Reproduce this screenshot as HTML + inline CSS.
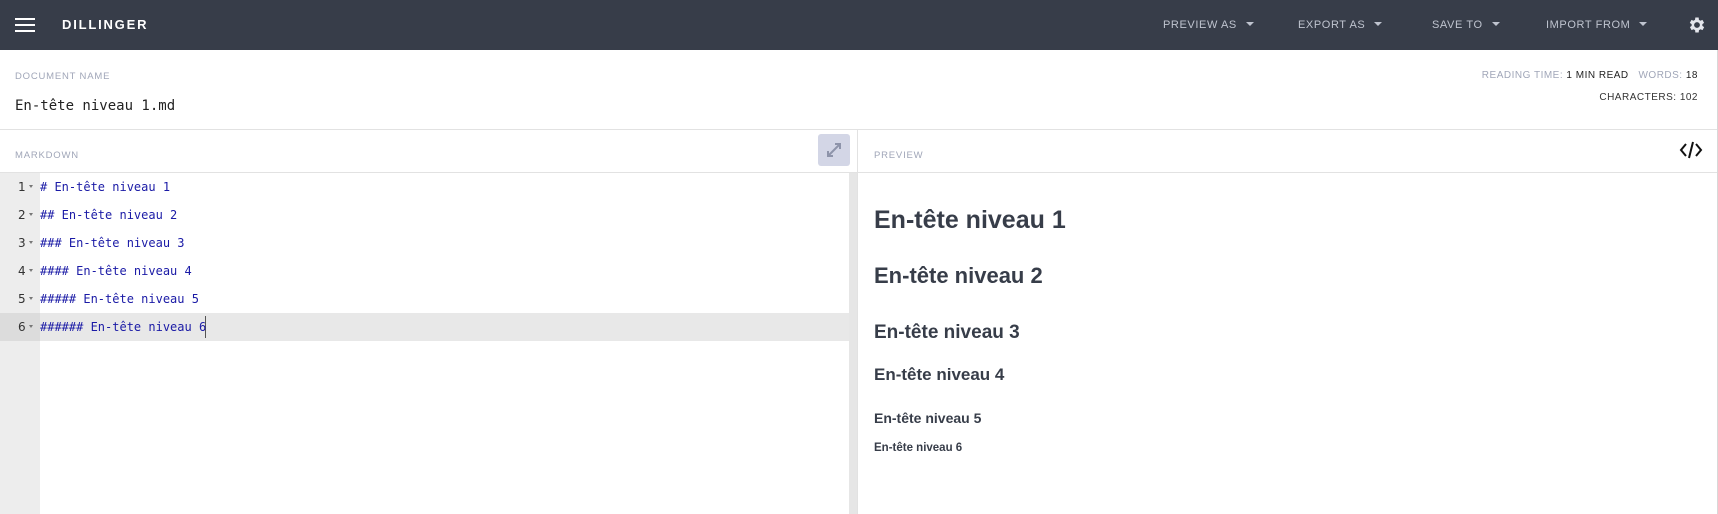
<!DOCTYPE html>
<html><head><meta charset="utf-8"><style>
*{margin:0;padding:0;box-sizing:border-box}
body{width:1718px;height:514px;overflow:hidden;background:#fff;font-family:"Liberation Sans","DejaVu Sans",sans-serif;position:relative}
.nav{position:absolute;left:0;top:0;width:1718px;height:50px;background:#373d49}
.abs{position:absolute;white-space:nowrap}
.navi{color:#bfc4cf;font-size:11px;letter-spacing:.6px;top:19px}
.navi:after{content:"";display:inline-block;margin-left:9px;border-left:4px solid transparent;border-right:4px solid transparent;border-top:4px solid #bfc4cf;vertical-align:2px}
.lbl{color:#a0a6b8;font-size:9.5px;letter-spacing:.8px}
.code{font-family:"DejaVu Sans Mono",monospace;font-size:12px;color:#1a1aa6;left:40px}
.num{font-family:"DejaVu Sans",sans-serif;font-size:12px;color:#333;left:18px}
.num:after{content:"";display:inline-block;margin-left:3px;border-left:2.5px solid transparent;border-right:2.5px solid transparent;border-top:3px solid #777;vertical-align:3px}
.h{color:#373d49;font-weight:bold;left:874px;font-family:"Liberation Sans",sans-serif}
</style></head><body>
<div class="nav">
 <div class="abs" style="left:15px;top:18px;width:20px;height:2px;background:#fff"></div>
 <div class="abs" style="left:15px;top:24px;width:20px;height:2px;background:#fff"></div>
 <div class="abs" style="left:15px;top:30px;width:20px;height:2px;background:#fff"></div>
 <div class="abs" style="left:62px;top:17px;color:#fff;font-size:13px;font-weight:bold;letter-spacing:1.8px">DILLINGER</div>
 <div class="abs navi" style="left:1163px">PREVIEW AS</div>
 <div class="abs navi" style="left:1298px">EXPORT AS</div>
 <div class="abs navi" style="left:1432px">SAVE TO</div>
 <div class="abs navi" style="left:1546px">IMPORT FROM</div>
 <svg class="abs" style="left:1687px;top:15px" width="20" height="20" viewBox="0 0 24 24"><path fill="#e4e6ec" d="M19.4 13a7.5 7.5 0 0 0 0-2l2.1-1.6-2-3.5-2.5 1a7 7 0 0 0-1.7-1L15 3h-4l-.4 2.9a7 7 0 0 0-1.7 1l-2.5-1-2 3.5L6.6 11a7.5 7.5 0 0 0 0 2l-2.1 1.6 2 3.5 2.5-1a7 7 0 0 0 1.7 1L11 21h4l.4-2.9a7 7 0 0 0 1.7-1l2.5 1 2-3.5zM13 15.5a3.5 3.5 0 1 1 0-7 3.5 3.5 0 0 1 0 7z" transform="translate(-1 0)"/></svg>
</div>
<div class="abs" style="left:1717px;top:50px;width:1px;height:464px;background:#d8d8d8"></div>
<div class="abs lbl" style="left:15px;top:71px">DOCUMENT NAME</div>
<div class="abs" style="left:15px;top:98px;font-family:'DejaVu Sans Mono',monospace;font-size:14px;color:#222">En-tête niveau 1.md</div>
<div class="abs" style="right:20px;top:70px;font-size:10px;letter-spacing:.5px;color:#a0a6b8">READING TIME: <span style="color:#222">1 MIN READ</span> &nbsp; WORDS: <span style="color:#222">18</span></div>
<div class="abs" style="right:20px;top:92px;font-size:10px;letter-spacing:.5px;color:#333">CHARACTERS: 102</div>
<div class="abs" style="left:0;top:129px;width:1717px;height:1px;background:#e2e2e2"></div>
<div class="abs lbl" style="left:15px;top:150px">MARKDOWN</div>
<div class="abs" style="left:818px;top:134px;width:32px;height:32px;background:#d3d6e6;border-radius:3px"></div>
<svg class="abs" style="left:826px;top:142px" width="16" height="16" viewBox="0 0 16 16"><path d="M2 14L14 2M9 2h5v5M2 9v5h5" stroke="#8e94aa" stroke-width="2" fill="none"/></svg>
<div class="abs lbl" style="left:874px;top:150px">PREVIEW</div>
<svg class="abs" style="left:1679px;top:141px" width="24" height="18" viewBox="0 0 24 18"><path d="M7 3L2 9l5 6M17 3l5 6-5 6M14 1L10 17" stroke="#111" stroke-width="2" fill="none"/></svg>
<div class="abs" style="left:0;top:172px;width:1717px;height:1px;background:#e2e2e2"></div>
<div class="abs" style="left:0;top:173px;width:40px;height:341px;background:#ededed"></div>
<div class="abs" style="left:0;top:313px;width:849px;height:28px;background:#e8e8e8"></div>
<div class="abs" style="left:0;top:313px;width:40px;height:28px;background:#dcdcdc"></div>
<div class="abs" style="left:849px;top:173px;width:8px;height:341px;background:#e6e6e6"></div>
<div class="abs" style="left:857px;top:129px;width:1px;height:385px;background:#e2e2e2"></div>
<div class="abs" style="left:205px;top:316px;width:1px;height:22px;background:#555"></div>
<div class="abs num" style="top:180px">1</div><div class="abs code" style="top:180px"># En-tête niveau 1</div>
<div class="abs num" style="top:208px">2</div><div class="abs code" style="top:208px">## En-tête niveau 2</div>
<div class="abs num" style="top:236px">3</div><div class="abs code" style="top:236px">### En-tête niveau 3</div>
<div class="abs num" style="top:264px">4</div><div class="abs code" style="top:264px">#### En-tête niveau 4</div>
<div class="abs num" style="top:292px">5</div><div class="abs code" style="top:292px">##### En-tête niveau 5</div>
<div class="abs num" style="top:320px">6</div><div class="abs code" style="top:320px">###### En-tête niveau 6</div>
<div class="abs h" style="top:206px;font-size:25px">En-tête niveau 1</div>
<div class="abs h" style="top:263px;font-size:22px">En-tête niveau 2</div>
<div class="abs h" style="top:322px;font-size:19px">En-tête niveau 3</div>
<div class="abs h" style="top:365px;font-size:17px">En-tête niveau 4</div>
<div class="abs h" style="top:410px;font-size:14px">En-tête niveau 5</div>
<div class="abs h" style="top:442px;font-size:11.5px">En-tête niveau 6</div>
</body></html>
